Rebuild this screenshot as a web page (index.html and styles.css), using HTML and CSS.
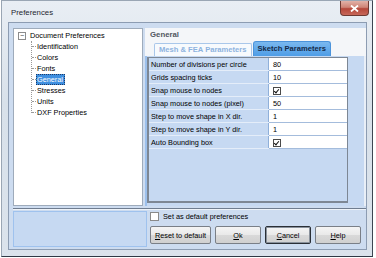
FILE: index.html
```html
<!DOCTYPE html>
<html lang="en">
<head>
    <meta charset="UTF-8">
    <title>Preferences</title>
    <link rel="stylesheet" href="styles.css">
</head>
<body>
    <div class="window">
        <div class="titlebar">
            <span class="title">Preferences</span>
            <button class="close-btn" aria-label="Close">
                <svg width="9" height="7" viewBox="0 0 9 7"><path d="M1 0.5 L8 6.5 M8 0.5 L1 6.5" stroke="#fff" stroke-width="1.8"/></svg>
            </button>
        </div>
        <div class="client">
            <div class="main">
                <div class="tree">
                    <div class="tree-root"><span class="expander">−</span>Document Preferences</div>
                    <ul class="tree-children">
                        <li>Identification</li>
                        <li>Colors</li>
                        <li>Fonts</li>
                        <li><span class="selected">General</span></li>
                        <li>Stresses</li>
                        <li>Units</li>
                        <li>DXF Properties</li>
                    </ul>
                </div>
                <div class="panel">
                    <div class="panel-title">General</div>
                    <div class="tabs">
                        <div class="tab">Mesh &amp; FEA Parameters</div>
                        <div class="tab active">Sketch Parameters</div>
                    </div>
                    <div class="tab-page">
                        <div class="grid">
                            <table>
                                <tr><td class="name">Number of divisions per circle</td><td class="value">80</td></tr>
                                <tr><td class="name">Grids spacing ticks</td><td class="value">10</td></tr>
                                <tr><td class="name">Snap mouse to nodes</td><td class="value"><span class="check"></span></td></tr>
                                <tr><td class="name">Snap mouse to nodes (pixel)</td><td class="value">50</td></tr>
                                <tr><td class="name">Step to move shape in X dir.</td><td class="value">1</td></tr>
                                <tr><td class="name">Step to move shape in Y dir.</td><td class="value">1</td></tr>
                                <tr><td class="name">Auto Bounding box</td><td class="value"><span class="check"></span></td></tr>
                            </table>
                        </div>
                    </div>
                </div>
            </div>
            <div class="separator"></div>
            <div class="bottom">
                <div class="info-box"></div>
                <div class="actions">
                    <label class="default-check"><span class="box"></span>Set as default preferences</label>
                    <div class="buttons">
                        <button class="btn btn-wide"><u>R</u>eset to default</button>
                        <button class="btn"><u>O</u>k</button>
                        <button class="btn btn-default"><u>C</u>ancel</button>
                        <button class="btn"><u>H</u>elp</button>
                    </div>
                </div>
            </div>
        </div>
    </div>
</body>
</html>
```

FILE: styles.css
```css
body {
    margin: 0;
    background-color: #ffffff;
    font-family: 'Liberation Sans', Arial, sans-serif;
    font-size: 7.3px;
    color: #000000;
}
.window {
    width: 370px;
    height: 255px;
    margin-left: 1px;
    border: 1px solid #9aa6b4;
    border-right-color: #3d4652;
    border-bottom-color: #2f3945;
    background: linear-gradient(180deg, #e9eef4 0%, #d8e1ea 40%, #dbe3ec 100%);
    display: flex;
    flex-direction: column;
}
.titlebar {
    height: 21px;
    display: flex;
    align-items: flex-start;
}
.title {
    margin: 7px 0 0 9px;
    font-size: 7.8px;
    color: #1e2530;
}
.close-btn {
    margin-left: auto;
    margin-right: 3px;
    width: 29px;
    height: 15px;
    padding: 0;
    border: 1px solid #6e3a33;
    border-top: none;
    border-radius: 0 0 4px 4px;
    background: linear-gradient(180deg, #e2b2a8 0%, #cf8476 45%, #b5473a 55%, #c7685a 100%);
    display: flex;
    align-items: center;
    justify-content: center;
}
.client {
    margin: 0 5px 0 6px;
    height: 226px;
    border: 1px solid #8c9cb2;
    background-color: #cddcf0;
    display: flex;
    flex-direction: column;
}
.main {
    height: 178px;
    margin-top: 5px;
    padding-left: 4px;
    display: flex;
}
.tree {
    width: 128px;
    border: 1px solid #9eabbb;
    background-color: #ffffff;
    padding-top: 1px;
}
.tree-root {
    height: 11px;
    line-height: 11px;
    display: flex;
    align-items: center;
    padding-left: 4px;
}
.expander {
    width: 6px;
    height: 6px;
    border: 1px solid #8c8c8c;
    margin-right: 4px;
    font-size: 7px;
    line-height: 5px;
    text-align: center;
    color: #333;
}
.tree-children {
    list-style: none;
    margin: 0 0 0 17px;
    padding: 0;
    position: relative;
}
.tree-children::before {
    content: '';
    position: absolute;
    left: 0;
    top: 0;
    bottom: 5px;
    border-left: 1px dotted #9a9a9a;
}
.tree-children li {
    height: 11px;
    line-height: 11px;
    padding-left: 6px;
    position: relative;
}
.tree-children li::before {
    content: '';
    position: absolute;
    left: 1px;
    top: 5px;
    width: 4px;
    border-top: 1px dotted #9a9a9a;
}
.selected {
    display: inline-block;
    margin-left: -1px;
    padding: 0 2px 0 1px;
    background-color: #3f8fe0;
    color: #ffffff;
    outline: 1px dotted #1d3b66;
    outline-offset: -1px;
}
.panel {
    flex: 1;
    margin-left: 2px;
    display: flex;
    flex-direction: column;
    background-color: #f4f6f9;
}
.panel-title {
    height: 14px;
    line-height: 14px;
    padding-left: 5px;
    font-size: 7.8px;
    font-weight: bold;
    color: #505660;
}
.tabs {
    height: 14px;
    display: flex;
    align-items: flex-end;
    padding-left: 9px;
}
.tab {
    height: 12px;
    line-height: 12px;
    padding: 0 4px;
    border: 1px solid #a9c7ea;
    border-bottom: none;
    border-radius: 2px 2px 0 0;
    background-color: #f7fafd;
    color: #8eb3df;
    font-weight: bold;
    font-size: 7.6px;
}
.tab.active {
    height: 14px;
    line-height: 14px;
    margin-left: 1px;
    border-color: #4b93db;
    background: linear-gradient(180deg, #7ab8ef 0%, #4e9de6 100%);
    color: #152a48;
    border-radius: 3px 3px 0 0;
}
.tab-page {
    flex: 1;
    background-color: #c6d9f2;
    border-left: 2px solid #9cc0ec;
    border-right: 2px solid #e9eff7;
    padding: 1px 16px 3px 0;
    display: flex;
}
.grid {
    flex: 1;
    border: 1px solid #7d8794;
    border-left-width: 2px;
    border-bottom-width: 2px;
    background-color: #c6d9f2;
}
table {
    width: 100%;
    border-collapse: collapse;
}
td {
    height: 12px;
    padding: 0 0 0 2px;
    border-bottom: 1px solid #a4bcdc;
    white-space: nowrap;
}
td.name {
    width: 117px;
    border-bottom-color: #e4edf9;
    border-right: 1px solid #8fb0da;
}
td.value {
    background-color: #ffffff;
    padding-left: 4px;
}
.check {
    display: inline-block;
    width: 6px;
    height: 6px;
    border: 1px solid #4a4a4a;
    vertical-align: middle;
    position: relative;
    background-color: #fff;
}
.check::after {
    content: '';
    position: absolute;
    left: 1px;
    top: 0;
    width: 2px;
    height: 4px;
    border: solid #111;
    border-width: 0 1.5px 1.5px 0;
    transform: rotate(40deg);
}
.separator {
    margin: 2px 0 0 4px;
    border-top: 1px solid #6f7d90;
    border-bottom: 1px solid #eef3f9;
}
.bottom {
    flex: 1;
    display: flex;
    padding: 1px 0 2px 4px;
}
.info-box {
    width: 132px;
    border: 1px solid #9fc2ee;
    background-color: #c6d9f2;
}
.actions {
    flex: 1;
    padding-left: 3px;
    display: flex;
    flex-direction: column;
}
.default-check {
    display: flex;
    align-items: center;
    height: 10px;
    margin-top: 0;
}
.box {
    width: 7px;
    height: 7px;
    border: 1px solid #8a8a8a;
    background-color: #ffffff;
    margin-right: 4px;
}
.buttons {
    display: flex;
    gap: 4px;
    margin-top: 5px;
}
.btn {
    width: 46px;
    height: 18px;
    padding: 0;
    border: 1px solid #7a7f87;
    border-radius: 2px;
    background: linear-gradient(180deg, #f5f5f5 0%, #e9e9e9 50%, #d9d9d9 51%, #d0d0d0 100%);
    font-family: 'Liberation Sans', Arial, sans-serif;
    font-size: 7.3px;
    color: #000000;
}
.btn-wide {
    width: 61px;
}
.btn-default {
    border: 1px solid #2a2f36;
    box-shadow: inset 0 0 0 1px #8a929c;
}
```
